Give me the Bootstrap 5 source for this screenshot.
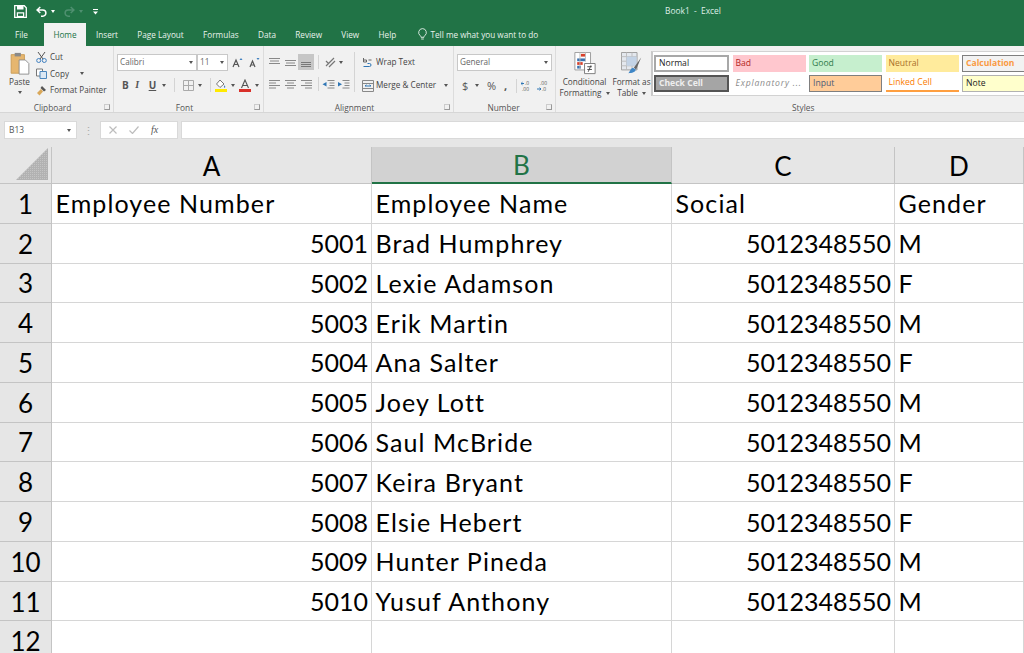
<!DOCTYPE html>
<html lang="en">
<head>
<meta charset="utf-8">
<title>Book1 - Excel</title>
<link href="https://cdn.jsdelivr.net/npm/bootstrap@5.3.0/dist/css/bootstrap.min.css" rel="stylesheet">
<style>
html,body{margin:0;width:1024px;height:653px;overflow:hidden;background:#fff}
body{font-family:"Open Sans","Liberation Sans",sans-serif;font-size:8.2px;color:#444;line-height:1}
svg{display:block;flex:none}
.xl-title{background:#217346;height:46px;color:#fff;flex:none}
.xl-qat{height:23px;padding-left:14px;gap:9px;position:relative}
.xl-name{position:absolute;left:665px;top:7px;color:#dfeee6;font-size:8.4px}
.xl-tabs{height:23px;padding-left:15px;color:#e8f2ec;font-size:8.2px}
.xl-tab{padding-top:8px;margin-right:19.3px}
.xl-tab-on{background:#f1f1f1;color:#217346;width:42px;height:23px;margin:0 10px 0 -3px;text-align:center;padding-top:8px}
.xl-file{margin-right:19px}
.xl-tell{padding-top:5px;margin-left:2px}
.xl-tell-t{padding-top:3px}
.xl-ribbon{height:67px;background:#f1f1f1;border-bottom:1px solid #d6d6d6;flex:none}
.xl-grp{position:relative;height:66px;border-right:1px solid #dcdcdc;flex:none;padding-top:4px}
.xl-glabel{position:absolute;left:0;right:8px;bottom:0;text-align:center;font-size:8.3px;color:#555}
.xl-glabel-n{right:2px}
.xl-glabel-s{right:0;text-align:left;padding-left:236px}
.xl-launch{position:absolute;right:3px;bottom:2px;width:6px;height:6px;border:1px solid #999;border-top-color:#ccc;border-left-color:#ccc}
.xl-small{height:16.5px;gap:3px;white-space:nowrap;font-size:8.1px}
.xl-select{background:#fff;border:1px solid #c8c8c8;height:17px;color:#666;padding:0 3px 0 2px}
.xl-caret{width:0;height:0;border:2.5px solid transparent;border-top:3px solid #555;border-bottom:0;flex:none}
.xl-caret-w{border-top-color:#fff}
.xl-caret-d{border-top-color:#4f9070}
.xl-vsep{width:1px;height:14px;background:#d4d4d4;flex:none}
.xl-bigicon{margin-top:2px}
.xl-big{text-align:center;line-height:11px;color:#444;white-space:nowrap;margin-top:1px}
.xl-w-clip{width:114px}.xl-w-font{width:150px;padding-left:3px;padding-top:8px}
.xl-w-align{width:190px;padding-left:5px;padding-top:8px}
.xl-w-num{width:102px;padding-left:3px;padding-top:8px}
.xl-w-sty{width:468px;border-right:0}
.xl-paste{width:36px;padding-left:3px}
.xl-paste-t{margin-top:3px}
.xl-paste-c{margin-top:5px}
.xl-clipcol{margin-top:-1px}
.xl-fs1{width:80px}.xl-fs2{width:31px}
.xl-gap6{margin-left:6px}
.xl-fontrow{margin-top:7px;padding-left:5px;height:14px;color:#555}
.xl-b{width:16px;font-size:10px;font-weight:700}
.xl-i{width:16px;font-size:10px;font-family:"Liberation Serif",serif;font-weight:700;font-style:italic}
.xl-u{width:16px;font-size:10px;font-weight:700;text-decoration:underline}
.xl-alcol{width:85px}
.xl-alrow1{height:16px}
.xl-ml1{margin-left:1px}.xl-ml2{margin-left:2px}.xl-ml3{margin-left:3px}.xl-ml4{margin-left:4px}.xl-ml5{margin-left:5px}.xl-ml6{margin-left:6px}
.xl-alrow2{height:14px;margin-top:7px}
.xl-vtall{height:40px;margin-right:7px;margin-top:-2px}
.xl-wrapcol{white-space:nowrap}
.xl-wr1{height:17px}.xl-wr2{height:17px;margin-top:6px}
.xl-numsel{width:95px}
.xl-numrow{margin-top:6px;height:17px;padding-left:5px;color:#555}
.xl-dollar{font-size:11px;width:13px}
.xl-mr8{margin-right:8px}
.xl-pct{font-size:11px;width:17px}
.xl-comma{font-size:11px;width:12px;font-weight:700}
.xl-bigcol1{width:57px;flex:none}
.xl-bigcol2{width:37px;flex:none}
.xl-galwrap{flex:none}
.xl-gallery{display:grid;grid-template-columns:75px repeat(4,73px);grid-template-rows:17px 17px;gap:3px 3.5px;background:#fff;border:1px solid #d2d2d2;border-right:0;border-left:2px solid #c9c9c9;padding:3px 0 3px 1px;height:45px;margin-left:1px;margin-top:1px;overflow:hidden}
.xl-st{font-size:8.6px;padding:0 3px;display:flex;align-items:center;white-space:nowrap;overflow:hidden}
.xl-st1{border:2px solid #a8a8a8;background:#fff;color:#222}
.xl-st2{background:#ffc7ce;color:#b3261e}
.xl-st3{background:#c6efce;color:#2f7a4a}
.xl-st4{background:#ffeb9c;color:#a9702a}
.xl-st5{background:#f2f2f2;color:#fa9a42;border:1px solid #7f7f7f;font-weight:700}
.xl-st6{background:#a5a5a5;color:#eee;border:2px solid #555;font-weight:700}
.xl-st7{color:#8a8a8a;font-style:italic;letter-spacing:.8px}
.xl-st8{background:#ffcc99;color:#4a5a78;border:1px solid #7f7f7f}
.xl-st9{color:#fa7d00;border-bottom:2px solid #ff9f40}
.xl-st10{background:#ffffcc;color:#222;border:1px solid #b2b2b2}
.xl-fbar{height:34px;background:#e6e6e6;padding:8px 0 0 4px;flex:none}
.xl-box{background:#fff;border:1px solid #d9d9d9;height:18px}
.xl-namebox{width:73px;padding:0 5px 0 4px;font-size:8.4px;color:#555}
.xl-dots{width:23px;height:18px;color:#aaa;font-size:11px}
.xl-fxbox{width:78px;gap:12px;padding-left:8px}
.xl-fx{font-family:"Liberation Serif",serif;font-size:10px;color:#555}
.xl-input{margin-left:3px;border-right:0}
.xl-sheet{display:grid;grid-template-columns:52px 320px 300px 223px 129px;grid-template-rows:37px repeat(12,39.77px);font-family:Lato,"Liberation Sans",sans-serif;color:#000}
.xl-sheet>div{border-right:1px solid #d6d6d6;border-bottom:1px solid #d6d6d6;font-size:25px;letter-spacing:1.1px;padding:1px 3px 0 3.5px;display:flex;align-items:center;white-space:nowrap;overflow:hidden}
.xl-sheet>.xl-hd{background:#e6e6e6;border-color:#c4c4c4;justify-content:center;padding:1px 0 0;font-size:26px;letter-spacing:0}
.xl-sheet>.xl-hd-on{background:#d2d2d2;color:#217346;border-bottom:2px solid #217346}
.xl-sheet>.xl-num{justify-content:flex-end;letter-spacing:0}
.xl-sheet>.xl-corner{padding:0;background:#e6e6e6;border-color:#c4c4c4}
.xl-tri{margin:0 3px 3px 0}
</style>
</head>
<body>
<div class="d-flex flex-column">
<header class="xl-title">
  <div class="xl-qat d-flex align-items-center">
    <svg width="13" height="13" viewBox="0 0 13 13"><path d="M.7.7h9.6l2 2v9.6H.7z" fill="none" stroke="#fff" stroke-width="1.3"/><path d="M3 1v3.6h6.5V1zM2.8 7.3h7.4v4.6H2.8z" fill="#fff"/><path d="M4 8.5h5v2.4H4z" fill="#217346"/></svg>
    <div class="d-flex align-items-center gap-1">
      <svg width="11" height="11" viewBox="0 0 11 11"><path d="M4.3 1 1 4l3.3 3M1.3 4h5.5a3.1 3.1 0 0 1 0 6.2H5" fill="none" stroke="#fff" stroke-width="1.5"/></svg>
      <div class="xl-caret xl-caret-w"></div>
    </div>
    <div class="d-flex align-items-center gap-1">
      <svg width="11" height="11" viewBox="0 0 11 11"><path d="M6.7 1 10 4 6.7 7M9.7 4H4.2a3.100 3.100 0 0 0 0 6.2H6" fill="none" stroke="#4f9070" stroke-width="1.5"/></svg>
      <div class="xl-caret xl-caret-d"></div>
    </div>
    <svg width="7" height="7" viewBox="0 0 7 7"><path d="M1 1h5v1H1zM1 3.500h5L3.500 6.500z" fill="#fff"/></svg>
    <div class="xl-name">Book1&nbsp; -&nbsp; Excel</div>
  </div>
  <nav class="xl-tabs d-flex">
    <div class="xl-tab xl-file">File</div>
    <div class="xl-tab-on">Home</div>
    <div class="xl-tab">Insert</div>
    <div class="xl-tab">Page Layout</div>
    <div class="xl-tab">Formulas</div>
    <div class="xl-tab">Data</div>
    <div class="xl-tab">Review</div>
    <div class="xl-tab">View</div>
    <div class="xl-tab">Help</div>
    <div class="d-flex align-items-start gap-1 xl-tell">
      <svg width="9" height="12" viewBox="0 0 9 12"><path d="M4.5.6a3.900 3.900 0 0 0-2.300 7c.6.5.8 1.100.8 1.700h3c0-.6.2-1.200.8-1.700a3.900 3.900 0 0 0-2.300-7zM3.200 11h2.600" fill="none" stroke="#e8f2ec" stroke-width=".9"/></svg>
      <div class="xl-tell-t">Tell me what you want to do</div>
    </div>
  </nav>
</header>

<section class="xl-ribbon d-flex">
  <div class="xl-grp d-flex xl-w-clip">
    <div class="d-flex flex-column align-items-center xl-paste">
      <svg class="xl-bigicon" width="20" height="23" viewBox="0 0 22 26"><path d="M1 3h15v21H1z" fill="#e6b66f" stroke="#c99a52"/><path d="M5 1h7v4H5z" fill="#8a8a8a"/><path d="M10 9h7l4 4v12H10z" fill="#fff" stroke="#888"/></svg>
      <div class="xl-paste-t">Paste</div>
      <div class="xl-caret xl-paste-c"></div>
    </div>
    <div class="d-flex flex-column xl-clipcol">
      <div class="xl-small d-flex align-items-center"><svg width="11" height="12" viewBox="0 0 11 12"><path d="M2 1l5 7M9 1 4 8" stroke="#555" fill="none"/><circle cx="2.700" cy="9.500" r="2" fill="none" stroke="#3f7fbf"/><circle cx="8.300" cy="9.500" r="2" fill="none" stroke="#3f7fbf"/></svg>Cut</div>
      <div class="xl-small d-flex align-items-center"><svg width="11" height="11" viewBox="0 0 11 11"><path d="M.5 1h6v7h-6z" fill="#fff" stroke="#777"/><path d="M4 3.500h6.500v7H4z" fill="#dbe8f4" stroke="#4b86bd"/></svg>Copy<div class="xl-caret ms-2"></div></div>
      <div class="xl-small d-flex align-items-center"><svg width="11" height="11" viewBox="0 0 11 11"><path d="M6 1l4 4-2 1.500L4.500 3z" fill="#555"/><path d="M5 4 1 8l2.500 2.500 3.500-4z" fill="#d9a85a"/></svg>Format Painter</div>
    </div>
    <div class="xl-glabel">Clipboard</div><div class="xl-launch"></div>
  </div>
  <div class="xl-grp d-flex flex-column xl-w-font">
    <div class="d-flex align-items-center">
      <div class="xl-select d-flex align-items-center justify-content-between xl-fs1">Calibri<div class="xl-caret"></div></div>
      <div class="xl-select d-flex align-items-center justify-content-between xl-fs2">11<div class="xl-caret"></div></div>
      <svg class="ms-1" width="11" height="11" viewBox="0 0 11 11"><path d="M1 10 4 3l3 7M2.300 7.500h3.400" stroke="#555" fill="none" stroke-width="1.200"/><path d="M7.500 3 9 1l1.500 2z" fill="#3f7fbf"/></svg>
      <svg class="xl-gap6" width="11" height="11" viewBox="0 0 11 11"><path d="M1 10 3.500 4 6 10M2 8h3" stroke="#555" fill="none" stroke-width="1.200"/><path d="M7.500 1 9 3l1.500-2z" fill="#3f7fbf"/></svg>
    </div>
    <div class="d-flex align-items-center xl-fontrow">
      <div class="xl-b">B</div><div class="xl-i">I</div><div class="xl-u">U</div>
      <div class="xl-caret me-2"></div><div class="xl-vsep me-2"></div>
      <svg width="11" height="11" viewBox="0 0 11 11"><path d="M.5.500h10v10H.5zM5.500.500v10M.5 5.500h10" fill="none" stroke="#aaa"/></svg>
      <div class="xl-caret mx-1"></div><div class="xl-vsep mx-1"></div>
      <svg width="12" height="13" viewBox="0 0 12 13"><path d="M5 1 1.500 5 5 8.500 9 5z" fill="#fff" stroke="#777"/><path d="M9 6l1.500 2-1.500 1z" fill="#3f7fbf"/><path d="M0 10h12v3H0z" fill="#ffea00"/></svg>
      <div class="xl-caret mx-1"></div>
      <svg width="12" height="13" viewBox="0 0 12 13"><path d="M2.500 9 6 1l3.500 8M3.800 6.500h4.400" stroke="#555" fill="none" stroke-width="1.100"/><path d="M0 10h12v3H0z" fill="#d9302a"/></svg>
      <div class="xl-caret mx-1"></div>
    </div>
    <div class="xl-glabel">Font</div><div class="xl-launch"></div>
  </div>
  <div class="xl-grp d-flex xl-w-align">
    <div class="xl-alcol">
      <div class="d-flex align-items-center xl-alrow1">
        <svg width="11" height="9" viewBox="0 0 11 9"><path d="M0 .5h11M1 3h9M0 5.500h11" stroke="#888"/></svg>
        <svg class="xl-ml5" width="11" height="9" viewBox="0 0 11 9"><path d="M0 2.500h11M1 5h9M0 7.500h11" stroke="#888"/></svg>
        <svg class="xl-ml2" width="16" height="16" viewBox="0 0 16 16"><path d="M0 0h16v16H0z" fill="#c6c6c6"/><path d="M3 8.500h10M3 10.500h10M3 12.500h10" stroke="#777"/></svg>
        <div class="xl-vsep xl-ml4"></div>
        <svg class="xl-ml6" width="11" height="11" viewBox="0 0 11 11"><path d="M1 9 9 1M4 10l6-6M1 4l3 3" stroke="#777" stroke-width="1.200"/></svg>
        <div class="xl-caret xl-ml3"></div>
      </div>
      <div class="d-flex align-items-center xl-alrow2">
        <svg width="11" height="9" viewBox="0 0 11 9"><path d="M0 .5h11M0 3h7M0 5.500h11M0 8h7" stroke="#888"/></svg>
        <svg class="xl-ml5" width="11" height="9" viewBox="0 0 11 9"><path d="M0 .5h11M2 3h7M0 5.500h11M2 8h7" stroke="#888"/></svg>
        <svg class="xl-ml5" width="11" height="9" viewBox="0 0 11 9"><path d="M0 .5h11M4 3h7M0 5.500h11M4 8h7" stroke="#888"/></svg>
        <div class="xl-vsep xl-ml6"></div>
        <svg class="xl-ml3" width="13" height="9" viewBox="0 0 12 9"><path d="M5 .5h7M7 3h5M7 5.500h5M5 8h7" stroke="#888"/><path d="M0 4.200 4 2v4.500z" fill="#2f76b5"/></svg>
        <svg class="xl-ml2" width="13" height="9" viewBox="0 0 12 9"><path d="M5 .5h7M7 3h5M7 5.500h5M5 8h7" stroke="#888"/><path d="M4.500 4.200.5 2v4.500z" fill="#2f76b5"/></svg>
      </div>
    </div>
    <div class="xl-vsep xl-vtall"></div>
    <div class="d-flex flex-column xl-wrapcol">
      <div class="d-flex align-items-center xl-wr1"><svg width="12" height="12" viewBox="0 0 11 12"><path d="M1 9.500h6a1.200 1.200 0 0 0 0-3H5" fill="none" stroke="#2f76b5"/><path d="M1 1v4M1 3h3v2H1zM6 3h3" fill="none" stroke="#666"/></svg><span class="xl-ml2">Wrap Text</span></div>
      <div class="d-flex align-items-center xl-wr2"><svg width="12" height="12" viewBox="0 0 12 12"><path d="M.5.500h11v11H.5zM.5 3.500h11M.5 8.500h11" fill="none" stroke="#888"/><path d="M3 6h6M3 6l1.500-1.200M9 6 7.500 4.800" stroke="#2f76b5"/></svg><span class="xl-ml2">Merge &amp; Center</span><div class="xl-caret ms-2"></div></div>
    </div>
    <div class="xl-glabel">Alignment</div><div class="xl-launch"></div>
  </div>
  <div class="xl-grp d-flex flex-column xl-w-num">
    <div class="xl-select d-flex align-items-center justify-content-between xl-numsel">General<div class="xl-caret"></div></div>
    <div class="d-flex align-items-center xl-numrow">
      <span class="xl-dollar">$</span><div class="xl-caret xl-mr8"></div><span class="xl-pct">%</span><span class="xl-comma">,</span><div class="xl-vsep me-1"></div>
      <svg width="12" height="12" viewBox="0 0 12 12"><path d="M0 3.500h3M0 3.500l1.500-1.300M0 3.500l1.500 1.300" stroke="#2f76b5"/><text x="4" y="5" font-size="5" fill="#555">.0</text><text x="1" y="11" font-size="5" fill="#555">.00</text></svg>
      <svg class="ms-1" width="12" height="12" viewBox="0 0 12 12"><text x="3" y="5" font-size="5" fill="#555">.00</text><path d="M0 9h4M4 9 2.500 7.700M4 9l-1.500 1.300" stroke="#2f76b5"/><text x="5" y="11" font-size="5" fill="#555">.0</text></svg>
    </div>
    <div class="xl-glabel xl-glabel-n">Number</div><div class="xl-launch"></div>
  </div>
  <div class="xl-grp d-flex xl-w-sty">
    <div class="d-flex flex-column align-items-center xl-bigcol1">
      <svg class="xl-bigicon" width="22" height="23" viewBox="0 0 23 25"><path d="M.5.500h17v19H.5z" fill="#fff" stroke="#999"/><path d="M7 2h5v3H7z" fill="#d9402a"/><path d="M3 7h9v3H3z" fill="#3a72b0"/><path d="M3 11h6v3H3z" fill="#d9402a"/><path d="M3 15h4v3H3z" fill="#3a72b0"/><path d="M6 .5v19M12 .5v10" stroke="#bbb"/><path d="M11 12.500h11.500v11H11z" fill="#fff" stroke="#777"/><path d="M14 16h5M14 19h5M18 14.500l-3 7" stroke="#444"/></svg>
      <div class="xl-big">Conditional<br>Formatting<span class="xl-caret d-inline-block ms-1 align-middle"></span></div>
    </div>
    <div class="d-flex flex-column align-items-center xl-bigcol2">
      <svg class="xl-bigicon" width="22" height="23" viewBox="0 0 24 25"><path d="M.5.500h17v19H.5z" fill="#e4e8ee" stroke="#999"/><path d="M.5 5h17M.5 10h17M.5 15h17M6 .5v19M12 .5v19" stroke="#bbb"/><path d="M6 5h11v10H6z" fill="#c3d3e6"/><path d="M22 6 14 17l2.500 2z" fill="#666"/><path d="M13 17c-3 1-3 4-5 6 4 0 8-1 8-4z" fill="#3f86c6"/></svg>
      <div class="xl-big">Format as<br>Table<span class="xl-caret d-inline-block ms-1 align-middle"></span></div>
    </div>
    <div class="xl-galwrap">
      <div class="xl-gallery">
        <div class="xl-st xl-st1">Normal</div>
        <div class="xl-st xl-st2">Bad</div>
        <div class="xl-st xl-st3">Good</div>
        <div class="xl-st xl-st4">Neutral</div>
        <div class="xl-st xl-st5">Calculation</div>
        <div class="xl-st xl-st6">Check Cell</div>
        <div class="xl-st xl-st7">Explanatory ...</div>
        <div class="xl-st xl-st8">Input</div>
        <div class="xl-st xl-st9">Linked Cell</div>
        <div class="xl-st xl-st10">Note</div>
      </div>
    </div>
    <div class="xl-glabel xl-glabel-s">Styles</div>
  </div>
</section>

<section class="xl-fbar d-flex">
  <div class="xl-box d-flex align-items-center justify-content-between xl-namebox">B13<div class="xl-caret"></div></div>
  <div class="d-flex align-items-center justify-content-center xl-dots">⋮</div>
  <div class="xl-box d-flex align-items-center xl-fxbox">
    <svg width="8" height="8" viewBox="0 0 8 8"><path d="M.5.500l7 7M7.500.500l-7 7" stroke="#bdbdbd" stroke-width="1.200"/></svg>
    <svg width="10" height="8" viewBox="0 0 10 8"><path d="M.5 4.500 3.500 7.500 9.500.5" stroke="#bdbdbd" stroke-width="1.200" fill="none"/></svg>
    <i class="xl-fx">fx</i>
  </div>
  <div class="xl-box flex-grow-1 xl-input"></div>
</section>

<main class="xl-sheet">
  <div class="xl-corner d-flex align-items-end justify-content-end"><svg class="xl-tri" width="32" height="32" viewBox="0 0 32 32"><defs><pattern id="xlDots" width="2" height="2" patternUnits="userSpaceOnUse"><rect width="2" height="2" fill="#b2b2b2"/><rect width="1" height="1" fill="#c4c4c4"/></pattern></defs><path d="M32 0V32H0z" fill="url(#xlDots)"/></svg></div>
  <div class="xl-hd">A</div><div class="xl-hd xl-hd-on">B</div><div class="xl-hd">C</div><div class="xl-hd">D</div>
  <div class="xl-hd">1</div><div>Employee Number</div><div>Employee Name</div><div>Social</div><div>Gender</div>
  <div class="xl-hd">2</div><div class="xl-num">5001</div><div>Brad Humphrey</div><div class="xl-num">5012348550</div><div>M</div>
  <div class="xl-hd">3</div><div class="xl-num">5002</div><div>Lexie Adamson</div><div class="xl-num">5012348550</div><div>F</div>
  <div class="xl-hd">4</div><div class="xl-num">5003</div><div>Erik Martin</div><div class="xl-num">5012348550</div><div>M</div>
  <div class="xl-hd">5</div><div class="xl-num">5004</div><div>Ana Salter</div><div class="xl-num">5012348550</div><div>F</div>
  <div class="xl-hd">6</div><div class="xl-num">5005</div><div>Joey Lott</div><div class="xl-num">5012348550</div><div>M</div>
  <div class="xl-hd">7</div><div class="xl-num">5006</div><div>Saul McBride</div><div class="xl-num">5012348550</div><div>M</div>
  <div class="xl-hd">8</div><div class="xl-num">5007</div><div>Keira Bryant</div><div class="xl-num">5012348550</div><div>F</div>
  <div class="xl-hd">9</div><div class="xl-num">5008</div><div>Elsie Hebert</div><div class="xl-num">5012348550</div><div>F</div>
  <div class="xl-hd">10</div><div class="xl-num">5009</div><div>Hunter Pineda</div><div class="xl-num">5012348550</div><div>M</div>
  <div class="xl-hd">11</div><div class="xl-num">5010</div><div>Yusuf Anthony</div><div class="xl-num">5012348550</div><div>M</div>
  <div class="xl-hd">12</div><div></div><div></div><div></div><div></div>
</main>
</div>
<script src="https://cdn.jsdelivr.net/npm/bootstrap@5.3.0/dist/js/bootstrap.bundle.min.js"></script>
</body>
</html>
